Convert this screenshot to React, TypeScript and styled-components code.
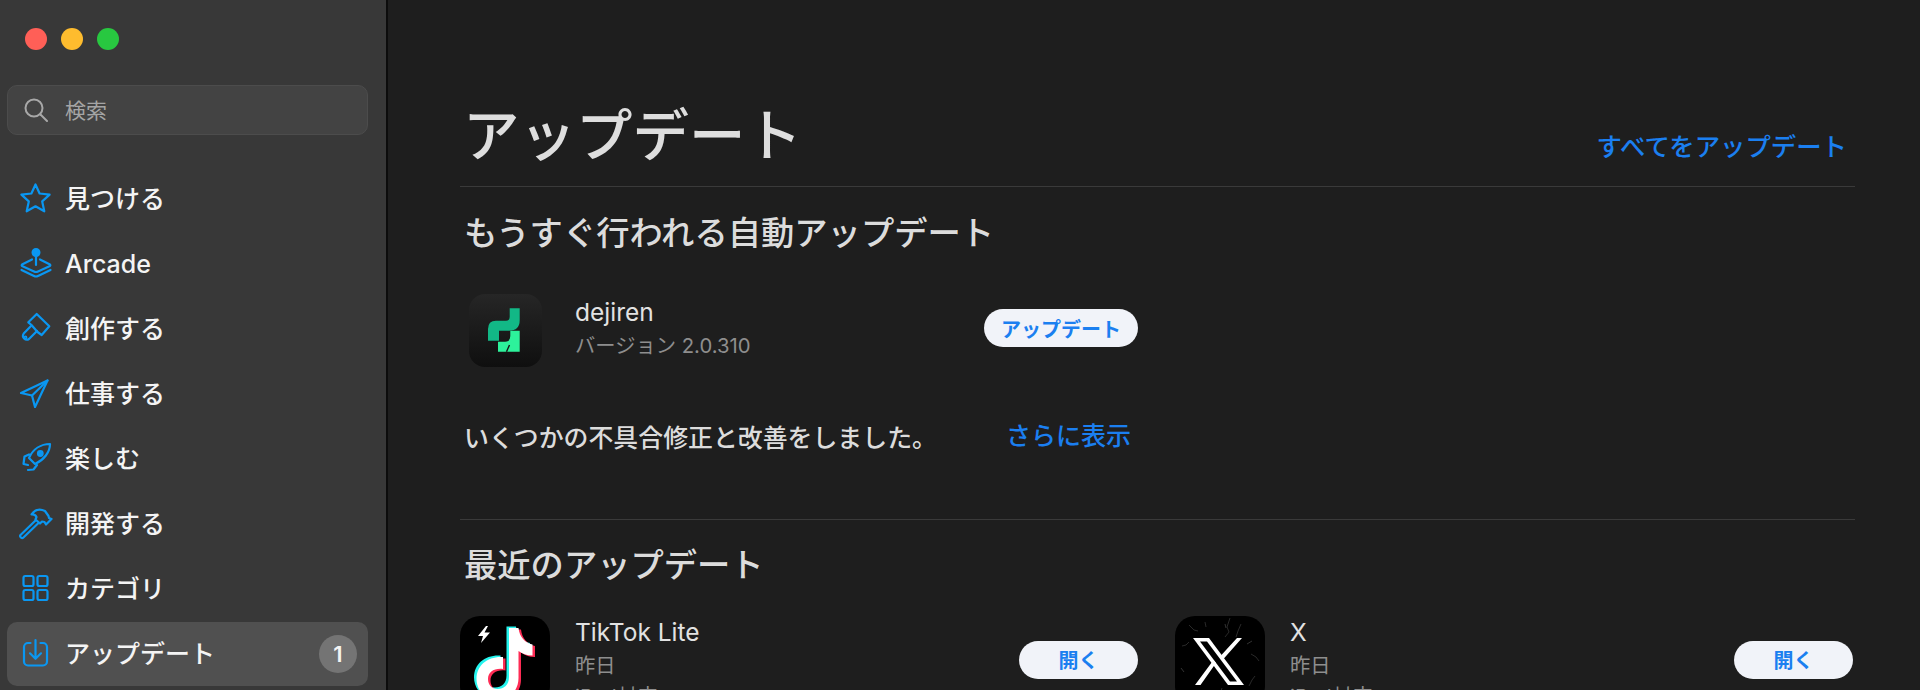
import React from 'react';
import styled, { createGlobalStyle } from 'styled-components';

const FONT = `Inter, "Noto Sans CJK JP", "Noto Sans", sans-serif`;
const BLUE = '#1b7ff0';
const ICON_BLUE = '#0a97f2';

const GlobalStyle = createGlobalStyle`
    html, body {
        margin: 0;
        padding: 0;
        height: 690px;
        overflow: hidden;
        background: #1e1e1e;
        font-family: ${FONT};
    }
    * { box-sizing: border-box; }
`;

// --- layout ---
const Page = styled.div`
    display: flex;
    width: 1920px;
    height: 690px;
    overflow: hidden;
`;

const Sidebar = styled.aside`
    flex: 0 0 388px;
    height: 690px;
    padding: 28px 18px 0 7px;
    background: #383838;
    border-right: 2px solid #0c0c0c;
    overflow: hidden;
`;

const TrafficLights = styled.div`
    display: flex;
    gap: 14px;
    padding-left: 18px;
    margin-bottom: 35px;
`;

const Light = styled.span<{ $color: string }>`
    width: 22px;
    height: 22px;
    border-radius: 50%;
    background: ${props => props.$color};
`;

const SearchBox = styled.div`
    display: flex;
    align-items: center;
    gap: 17px;
    height: 50px;
    padding-left: 16px;
    margin-bottom: 32px;
    background: #434343;
    border: 1px solid #4c4c4c;
    border-radius: 10px;
    color: #a5a5a5;
    font-size: 21px;
`;

const SearchLabel = styled.span`
    padding-bottom: 2px;
`;

const NavList = styled.nav`
    display: flex;
    flex-direction: column;
    gap: 1px;
`;

const NavRow = styled.div<{ $active?: boolean }>`
    display: flex;
    align-items: center;
    gap: 12px;
    height: 64px;
    padding: 0 11px 0 12px;
    border-radius: 10px;
    background: ${props => (props.$active ? '#505050' : 'transparent')};
    color: #f4f4f4;
    font-size: 25px;
    font-weight: 500;
`;

const NavIcon = styled.svg`
    flex: 0 0 34px;
    width: 34px;
    height: 34px;
    margin-bottom: 2px;
    fill: none;
    stroke: ${ICON_BLUE};
    stroke-width: 2.2;
    stroke-linecap: round;
    stroke-linejoin: round;
`;

const NavLabel = styled.span<{ $latin?: boolean }>`
    flex: 1;
    padding-bottom: ${props => (props.$latin ? '0' : '4px')};
`;

const Badge = styled.span`
    display: flex;
    align-items: center;
    justify-content: center;
    width: 38px;
    height: 38px;
    border-radius: 50%;
    background: #747474;
    color: #f4f4f4;
    font-size: 22px;
    font-weight: 600;
`;

const Main = styled.main`
    flex: 1;
    padding: 0 65px 0 72px;
    background: #1e1e1e;
    color: #dedede;
`;

const TitleBar = styled.header`
    display: flex;
    align-items: flex-end;
    justify-content: space-between;
    height: 187px;
    padding: 0 8px 23px 3px;
    border-bottom: 1px solid #3a3a3a;
`;

const Title = styled.h1`
    margin: 0 0 -9px;
    font-size: 56.5px;
    line-height: 72px;
    font-weight: 500;
`;

const LinkText = styled.span<{ $large?: boolean }>`
    color: ${BLUE};
    font-size: ${props => (props.$large ? '25.4px' : '25px')};
    font-weight: 500;
    line-height: 32px;
`;

const SectionTitle = styled.h2`
    margin: 0;
    padding-left: 4px;
    font-size: 33.3px;
    line-height: 44px;
    font-weight: 500;
    color: #dcdcdc;
`;

const UpcomingTitle = styled(SectionTitle)`
    margin-top: 24px;
`;

const UpcomingRow = styled.div`
    display: flex;
    align-items: center;
    height: 73px;
    margin-top: 39px;
    padding-left: 9px;
`;

const AppText = styled.div`
    display: flex;
    flex-direction: column;
    flex: 1;
    min-width: 0;
`;

const UpcomingText = styled(AppText)`
    flex: 0 0 409px;
    margin-bottom: 3px;
`;

const RecentText = styled(AppText)`
    margin-top: 7px;
`;

const AppName = styled.div`
    font-size: 24.5px;
    line-height: 34px;
    color: #e2e2e2;
`;

const AppMeta = styled.div`
    font-size: 20.3px;
    line-height: 34px;
    color: #8e8e8e;
`;

const AppNote = styled(AppMeta)`
    margin-top: -3px;
`;

const PillButton = styled.button<{ $wide?: boolean }>`
    flex: 0 0 auto;
    width: ${props => (props.$wide ? '154px' : '119px')};
    height: 38px;
    margin-bottom: ${props => (props.$wide ? '5px' : '3px')};
    padding: 0;
    border: none;
    border-radius: 19px;
    background: #f1f3f9;
    color: ${BLUE};
    font-family: ${FONT};
    font-size: 20px;
    font-weight: 600;
`;

const Notes = styled.div`
    display: flex;
    align-items: center;
    height: 40px;
    margin-top: 49px;
    padding-left: 4px;
    font-size: 24.9px;
    font-weight: 500;
    color: #dcdcdc;
`;

const NotesText = styled.span`
    width: 542px;
`;

const Divider = styled.hr`
    height: 1px;
    margin: 63px 0 0;
    border: none;
    background: #3a3a3a;
`;

const RecentHeader = styled(SectionTitle)`
    margin-top: 23px;
`;

const RecentGrid = styled.div`
    display: grid;
    grid-template-columns: 678px 678px;
    column-gap: 37px;
    margin-top: 29px;
`;

const RecentRow = styled.div`
    display: flex;
    gap: 25px;
`;

const RecentIcon = styled.svg`
    flex: 0 0 90px;
    width: 90px;
    height: 90px;
`;

const RecentBody = styled.div`
    display: flex;
    align-items: center;
    flex: 1;
    height: 90px;
`;

const SmallIcon = styled.svg`
    flex: 0 0 73px;
    width: 73px;
    height: 73px;
    margin-right: 33px;
`;

// --- icons ---
const SearchIcon = () => (
    <svg width="24" height="24" viewBox="0 0 24 24" fill="none" stroke="#a8a8a8" strokeWidth="2" strokeLinecap="round">
        <circle cx="10" cy="10" r="8.500" />
        <path d="M16.500 16.500l6.500 6.500" />
    </svg>
);

const navIcons: Record<string, React.ReactNode> = {
    star: <path d="M16.500 3.500l4.100 9 10 1.100-7.400 6.800 2.100 9.900-8.800-5-8.800 5 2.100-9.900-7.400-6.800 10-1.100z" />,
    arcade: (
        <>
            <path d="M13 13.500L3 18.500a1 1 0 0 0 0 1.500L15 25.500a4.500 4.500 0 0 0 4 0L31 20a1 1 0 0 0 0-1.500L21 13.500" />
            <path d="M2.500 24L15 30a4.500 4.500 0 0 0 4 0L31.500 24" />
            <path d="M17 9v10" />
            <circle cx="17" cy="6.500" r="3.400" fill={ICON_BLUE} />
        </>
    ),
    brush: (
        <>
            <path d="M17.700 3L30.300 15.300 22.700 24l-4.200-3-6-7-3.200-2.700z" />
            <path d="M12 15l-7.300 7.500A3.900 3.900 0 0 0 10 28l8-8" />
            <circle cx="6.500" cy="26.500" r="0.800" />
        </>
    ),
    send: (
        <>
            <path d="M28.500 4.500L2 17l11 2.500L16 31z" />
            <path d="M13 19.500L28.500 4.500" />
        </>
    ),
    rocket: (
        <>
            <path d="M31 3C22 3 14 8 10 17l6 6c9-4 15-12 15-20z" />
            <circle cx="21.300" cy="12.500" r="2.300" fill={ICON_BLUE} />
            <path d="M10 13.500L5.500 15.500 4.500 23 9 24" />
            <path d="M18 24l-3.500 4.500L9 29" />
        </>
    ),
    hammer: (
        <>
            <path d="M16.500 14.500L1.500 29a1.500 1.500 0 0 0 0 2l.700.700a1.500 1.500 0 0 0 2 0L19.500 17" />
            <path d="M12.500 8.500C16 3.500 21 2.500 26 5l3.500 5 .500 2 2.500 1-5.500 5.500-1.500-2.500-2.500-.500-2 2-4.500-4 1-2.500c-1-2-3-2.700-5-2.500z" />
        </>
    ),
    grid: (
        <>
            <rect x="4.500" y="5" width="10" height="10" rx="1.800" />
            <rect x="18.500" y="5" width="10" height="10" rx="1.800" />
            <rect x="4.500" y="19" width="10" height="10" rx="1.800" />
            <rect x="18.500" y="19" width="10" height="10" rx="1.800" />
        </>
    ),
    update: (
        <>
            <path d="M11.500 7H9a4 4 0 0 0-4 4v14.500a4 4 0 0 0 4 4h15a4 4 0 0 0 4-4V11a4 4 0 0 0-4-4h-2.500" />
            <path d="M16.500 4v18.500M11 17.300l5.500 5.500 5.500-5.500" />
        </>
    ),
};

const navItems = [
    { key: 'star', label: '見つける' },
    { key: 'arcade', label: 'Arcade', latin: true },
    { key: 'brush', label: '創作する' },
    { key: 'send', label: '仕事する' },
    { key: 'rocket', label: '楽しむ' },
    { key: 'hammer', label: '開発する' },
    { key: 'grid', label: 'カテゴリ' },
];

const DejirenIcon = () => (
    <SmallIcon viewBox="0 0 73 73">
        <defs>
            <linearGradient id="dejirenBg" x1="0" y1="0" x2="0" y2="1">
                <stop offset="0" stopColor="#262626" />
                <stop offset="1" stopColor="#0f0f0f" />
            </linearGradient>
        </defs>
        <rect width="73" height="73" rx="16" fill="url(#dejirenBg)" />
        <path d="M40.700 14.300H50.700V26Q50.700 36.700 40 36.700H30V46.700H19V35Q19 26.700 27 26.700H37Q40.700 26.700 40.700 23z" fill="#12b886" />
        <path d="M41.300 36.700H50.700V57.700H29V47.700H36Q41.300 47.700 41.300 42z" fill="#2df29b" />
        <path d="M37.500 57.700L40.500 51" stroke="#141414" strokeWidth="1.400" fill="none" />
    </SmallIcon>
);

const NOTE_PATH = 'M49 12H58.500C59.500 21 65 27 72.500 28.500V39.500C66.500 39.500 62 37.500 58.500 35V62C58.500 75 49 84 37 84C25 84 16.500 74 16.500 63C16.500 49 28 40 43 41V53C34 52 28 56 28 63C28 69 32 73 37.500 73C44 73 49 69 49 61z';

const TikTokIcon = () => (
    <RecentIcon viewBox="0 0 90 90">
        <rect width="90" height="90" rx="20" fill="#000" />
        <path d="M26 10L18 20h5l-2 7 9-10.500h-5.500L28 10z" fill="#fff" />
        <path d={NOTE_PATH} fill="#25f4ee" transform="translate(-2.500 -1.500)" />
        <path d={NOTE_PATH} fill="#fe2c55" transform="translate(2.500 1.500)" />
        <path d={NOTE_PATH} fill="#fff" />
    </RecentIcon>
);

const XIcon = () => (
    <RecentIcon viewBox="0 0 90 90">
        <rect width="90" height="90" rx="20" fill="#000" />
        <path d="M55 2l-3 9 2 5-4 5M66 8l-3 7-2 6M14 9l5 5 4 1M7 30l4-1 3-3M76 38l5 3 3 4M80 60l-3 4-3 6M47 72l-2 6 1 8M62 78l1 8M14 76l5 4 3 5M30 6l1 5" stroke="#333" strokeWidth="0.800" fill="none" />
        <path d="M50 8l1 4M6 52l3 4M72 28l5-3" stroke="#555" strokeWidth="0.600" fill="none" />
        <path d="M18 22H34L69 69H53z" fill="#fff" />
        <path d="M25 25.500H32L62 65.500H55z" fill="#000" />
        <path d="M67 22H62L45.500 40 48 43.500zM41 47L38.500 44 20 69H25.500z" fill="#fff" />
    </RecentIcon>
);

export default function App() {
    return (
        <>
            <GlobalStyle />
            <Page>
                <Sidebar>
                    <TrafficLights>
                        <Light $color="#ff5f57" />
                        <Light $color="#febc2e" />
                        <Light $color="#28c840" />
                    </TrafficLights>
                    <SearchBox>
                        <SearchIcon />
                        <SearchLabel>検索</SearchLabel>
                    </SearchBox>
                    <NavList>
                        {navItems.map(item => (
                            <NavRow key={item.key}>
                                <NavIcon viewBox="0 0 34 34">{navIcons[item.key]}</NavIcon>
                                <NavLabel $latin={item.latin}>{item.label}</NavLabel>
                            </NavRow>
                        ))}
                        <NavRow $active>
                            <NavIcon viewBox="0 0 34 34">{navIcons.update}</NavIcon>
                            <NavLabel>アップデート</NavLabel>
                            <Badge>1</Badge>
                        </NavRow>
                    </NavList>
                </Sidebar>
                <Main>
                    <TitleBar>
                        <Title>アップデート</Title>
                        <LinkText $large>すべてをアップデート</LinkText>
                    </TitleBar>
                    <UpcomingTitle>もうすぐ行われる自動アップデート</UpcomingTitle>
                    <UpcomingRow>
                        <DejirenIcon />
                        <UpcomingText>
                            <AppName>dejiren</AppName>
                            <AppMeta>バージョン 2.0.310</AppMeta>
                        </UpcomingText>
                        <PillButton $wide>アップデート</PillButton>
                    </UpcomingRow>
                    <Notes>
                        <NotesText>いくつかの不具合修正と改善をしました。</NotesText>
                        <LinkText>さらに表示</LinkText>
                    </Notes>
                    <Divider />
                    <RecentHeader>最近のアップデート</RecentHeader>
                    <RecentGrid>
                        <RecentRow>
                            <TikTokIcon />
                            <RecentBody>
                                <RecentText>
                                    <AppName>TikTok Lite</AppName>
                                    <AppMeta>昨日</AppMeta>
                                    <AppNote>iPad対応</AppNote>
                                </RecentText>
                                <PillButton>開く</PillButton>
                            </RecentBody>
                        </RecentRow>
                        <RecentRow>
                            <XIcon />
                            <RecentBody>
                                <RecentText>
                                    <AppName>X</AppName>
                                    <AppMeta>昨日</AppMeta>
                                    <AppNote>iPad対応</AppNote>
                                </RecentText>
                                <PillButton>開く</PillButton>
                            </RecentBody>
                        </RecentRow>
                    </RecentGrid>
                </Main>
            </Page>
        </>
    );
}
